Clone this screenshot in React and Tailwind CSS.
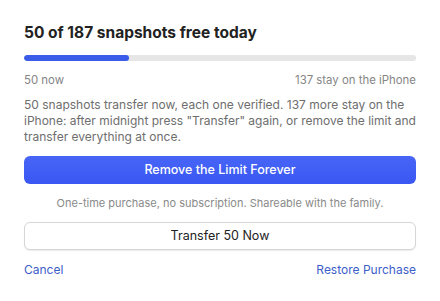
export default function App() {
  return (
    <div
      className="w-[440px] h-[301px] bg-white px-6 pt-[23px] overflow-hidden"
      style={{ fontFamily: "Inter, 'Noto Sans', sans-serif" }}
    >
      <h1 className="text-[15.5px] leading-[20px] font-bold text-[#222222]">
        50 of 187 snapshots free today
      </h1>
      <div className="mt-[12px] h-[6px] rounded-full bg-[#e6e6e6] overflow-hidden">
        <div className="h-full w-[105px] rounded-full bg-[#3a5ce9]" />
      </div>
      <div className="mt-[12px] flex justify-between text-[11.4px] leading-[14px] text-[#858585]">
        <span>50 now</span>
        <span>137 stay on the iPhone</span>
      </div>
      <p className="mt-[10px] text-[12px] leading-[16px] text-[#6e6e6e]">
        50 snapshots transfer now, each one verified. 137 more stay on the iPhone: after midnight press "Transfer" again, or remove the limit and transfer everything at once.
      </p>
      <button className="mt-[11px] w-full h-[28px] rounded-[6px] bg-gradient-to-b from-[#4766f7] to-[#3a57f2] text-white text-[12.5px] font-medium flex items-center justify-center">
        Remove the Limit Forever
      </button>
      <p className="mt-[12px] text-center text-[11px] leading-[14px] text-[#8a8a8a]">
        One-time purchase, no subscription. Shareable with the family.
      </p>
      <button className="mt-[12px] w-full h-[28px] rounded-[6px] bg-white border border-[#d6d6d6] shadow-[0_1px_1px_rgba(0,0,0,0.08)] text-[#222222] text-[12.5px] flex items-center justify-center">
        Transfer 50 Now
      </button>
      <div className="mt-[12px] flex justify-between text-[12px] leading-[16px] text-[#3d5ec8]">
        <span>Cancel</span>
        <span>Restore Purchase</span>
      </div>
    </div>
  );
}
